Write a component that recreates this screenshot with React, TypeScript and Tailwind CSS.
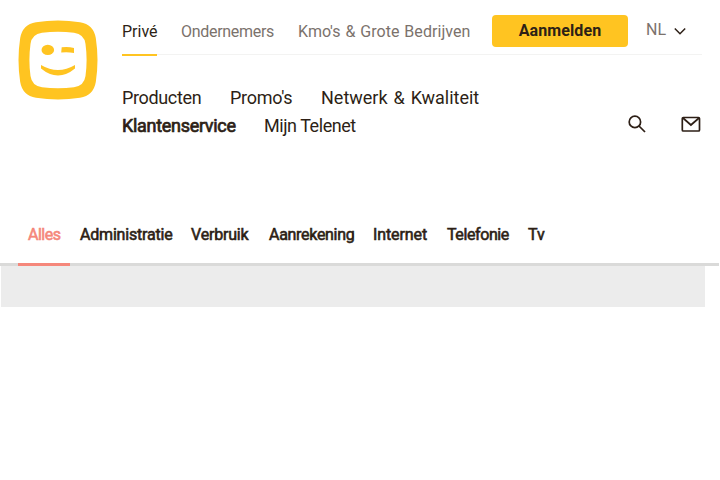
type Item = { label: string; box: string; active?: boolean };

const segments: Item[] = [
  { label: "Privé", box: "w-[35px]", active: true },
  { label: "Ondernemers", box: "w-[93px] tracking-[-0.3px]" },
  { label: "Kmo's & Grote Bedrijven", box: "w-[173px] tracking-[0.05px] [word-spacing:0.8px]" },
];

const navRows: Item[][] = [
  [
    { label: "Producten", box: "w-[79px] tracking-[-0.35px]" },
    { label: "Promo's", box: "w-[62px] tracking-[-0.25px]" },
    { label: "Netwerk & Kwaliteit", box: "w-[158px] [word-spacing:1.5px]" },
  ],
  [
    { label: "Klantenservice", box: "w-[113px] tracking-[-0.3px]", active: true },
    { label: "Mijn Telenet", box: "w-[92px] tracking-[-0.45px]" },
  ],
];

const tabs: Item[] = [
  { label: "Alles", box: "w-[52px] tracking-[-0.5px]", active: true },
  { label: "Administratie", box: "w-[111px] tracking-[-0.2px]" },
  { label: "Verbruik", box: "w-[78px] tracking-[-0.2px]" },
  { label: "Aanrekening", box: "w-[104px] tracking-[-0.3px]" },
  { label: "Internet", box: "w-[74px] tracking-[-0.1px]" },
  { label: "Telefonie", box: "w-[81px] tracking-[-0.4px]" },
  { label: "Tv", box: "w-[37px]" },
];

function Logo() {
  return (
    <svg className="h-20 w-20 shrink-0" viewBox="0 0 80 80" fill="#ffc421">
      <path
        fillRule="evenodd"
        d="M18 2.200Q40-1.200 62 2.200Q75.500 4.500 77.800 18Q81.200 40 77.800 62Q75.500 75.500 62 77.800Q40 81.200 18 77.800Q4.500 75.500 2.200 62Q-1.200 40 2.200 18Q4.500 4.500 18 2.200ZM24 12.800Q13.800 14.200 12.500 24Q10.300 40 12.500 56Q13.800 65.800 24 67.200Q40 69.500 56 67.200Q66.200 65.800 67.500 56Q69.700 40 67.500 24Q66.200 14.200 56 12.800Q40 10.500 24 12.800Z"
      />
      <ellipse cx="29.800" cy="29.900" rx="6.300" ry="5.200" />
      <path d="M43.700 27.300Q50 26.300 56 28V33Q50 31.800 43.200 32.500Z" />
      <path d="M23 45Q40 55 57 45V48.500Q40 62.500 23 48.500Z" />
    </svg>
  );
}

export default function App() {
  return (
    <div className="h-[480px] w-[720px] overflow-hidden bg-white font-[Roboto,sans-serif] text-[#2d1f16]">
      <header className="flex h-[203px] pl-[18px] pt-[15px]">
        <div className="w-[104px] pt-[5px]">
          <Logo />
        </div>
        <div className="w-[580px]">
          <div className="flex h-10 border-b border-[#f3f3f2]">
            <nav className="flex gap-6">
              {segments.map((s) => (
                <a
                  key={s.label}
                  className={`h-[41px] whitespace-nowrap pt-[5px] text-base ${s.box} ${s.active ? "border-b-2 border-[#ffc421]" : "text-[#7b726c]"}`}
                >
                  {s.label}
                </a>
              ))}
            </nav>
            <button className="ml-[21px] h-8 w-[136px] rounded bg-[#ffc421] text-base font-bold tracking-[0.1px]">
              Aanmelden
            </button>
            <div className="ml-[18px] flex h-[30px] items-center text-[#7b726c]">
              <span className="w-7">NL</span>
              <svg className="mt-px h-3 w-3" viewBox="0 0 12 12" fill="none" stroke="#2d1f16" strokeWidth="1.500">
                <path d="M.8 3.500 6 8.700l5.200-5.200" />
              </svg>
            </div>
          </div>
          <div className="flex pt-[29px]">
            <nav className="w-[500px] text-lg">
              {navRows.map((row, i) => (
                <div key={i} className="flex h-7 gap-[29px]">
                  {row.map((n) => (
                    <a key={n.label} className={`whitespace-nowrap ${n.box} ${n.active ? "[-webkit-text-stroke:0.7px]" : ""}`}>
                      {n.label}
                    </a>
                  ))}
                </div>
              ))}
            </nav>
            <div className="flex gap-8 pl-[5px] pt-[30px]">
              <svg className="h-5 w-5" viewBox="0 0 20 20" fill="none" stroke="#2d1f16" strokeWidth="1.700">
                <circle cx="7.900" cy="7.900" r="5.700" />
                <path d="m12 12 6 6" />
              </svg>
              <svg className="h-5 w-[22px]" viewBox="0 0 22 20" fill="none" stroke="#2d1f16" strokeWidth="1.700">
                <rect x="3.300" y="3.500" width="17.200" height="13.500" rx="1" />
                <path d="m4 4 7.900 7L20 4" />
              </svg>
            </div>
          </div>
        </div>
      </header>
      <nav className="flex h-[63px] w-[719px] border-b-[3px] border-[#dadad9] pl-[18px]">
        {tabs.map((t) => (
          <a
            key={t.label}
            className={`h-[63px] whitespace-nowrap pl-[10px] pt-5 text-base [-webkit-text-stroke:0.6px] ${t.box} ${t.active ? "border-b-[3px] border-[#f5877b] text-[#f5877b]" : ""}`}
          >
            {t.label}
          </a>
        ))}
      </nav>
      <div className="ml-px h-[41px] w-[704px] bg-[#ececec]" />
    </div>
  );
}
